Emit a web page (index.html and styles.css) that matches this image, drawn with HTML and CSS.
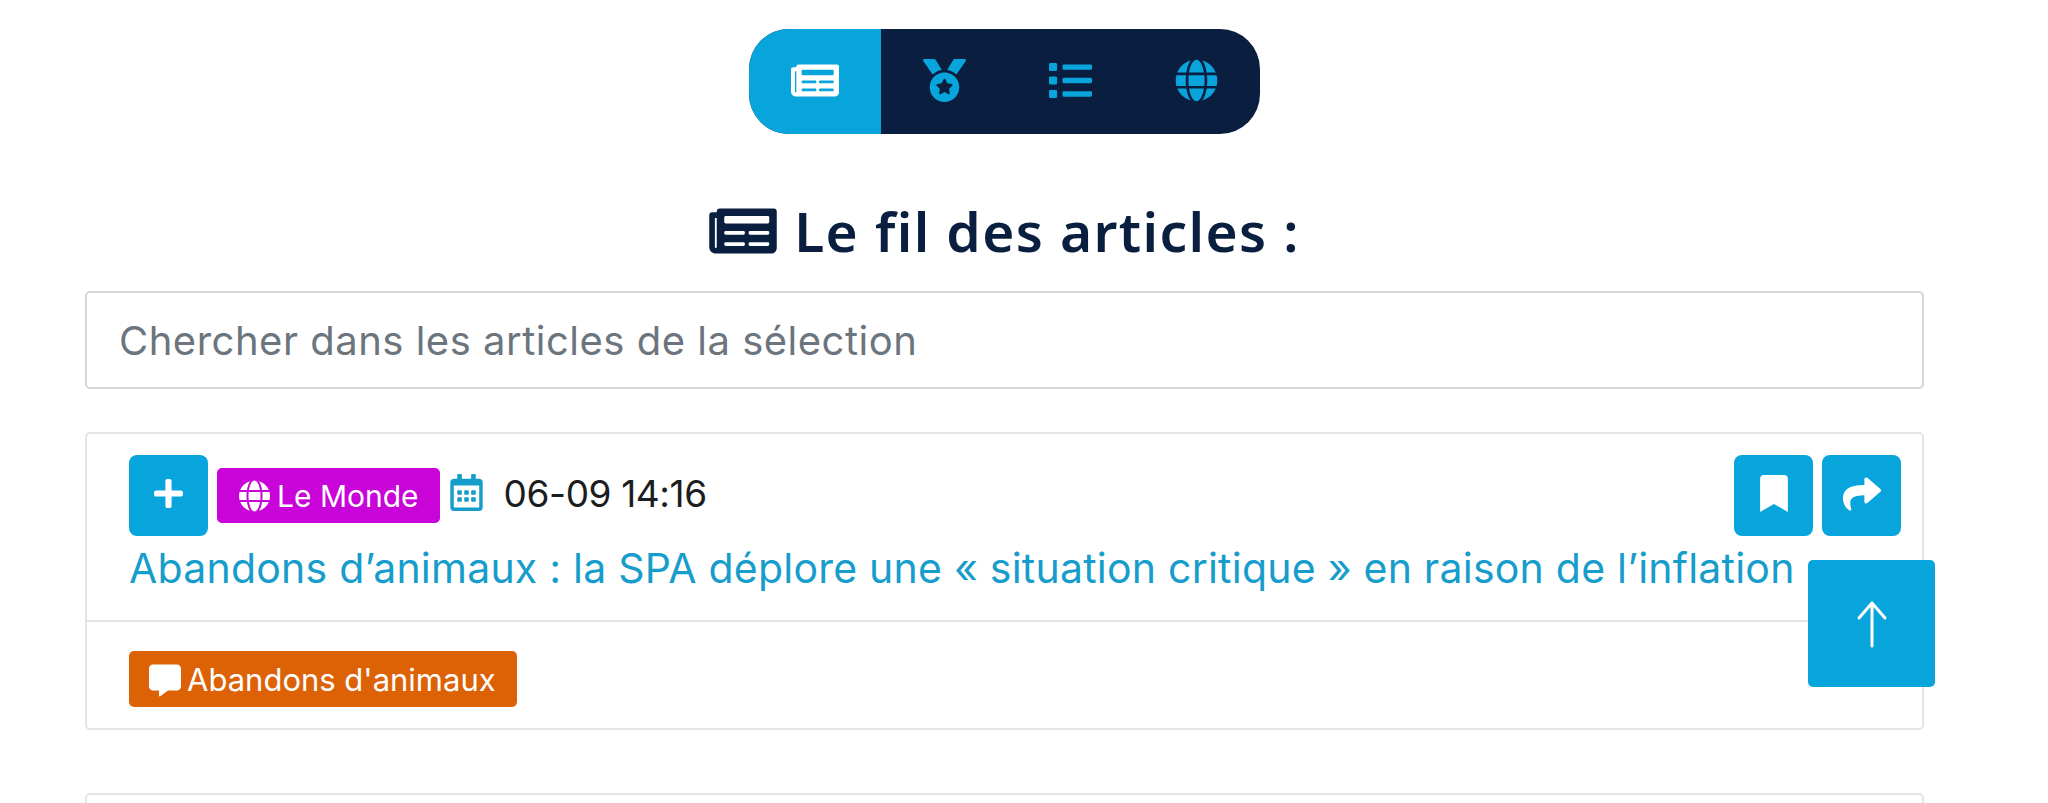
FILE: index.html
```html
<!DOCTYPE html>
<html lang="fr">
<head>
<meta charset="utf-8">
<title>Le fil des articles</title>
<link rel="stylesheet" href="styles.css">
</head>
<body>
<svg class="defs" aria-hidden="true">
  <defs>
    <symbol id="newspaper" viewBox="0 0 576 512"><path d="M552 64H88c-13.255 0-24 10.745-24 24v8H24c-13.255 0-24 10.745-24 24v272c0 30.928 25.072 56 56 56h472c26.51 0 48-21.49 48-48V88c0-13.255-10.745-24-24-24zM56 400a8 8 0 0 1-8-8V144h16v248a8 8 0 0 1-8 8zm236-16H140c-6.627 0-12-5.373-12-12v-8c0-6.627 5.373-12 12-12h152c6.627 0 12 5.373 12 12v8c0 6.627-5.373 12-12 12zm208 0H348c-6.627 0-12-5.373-12-12v-8c0-6.627 5.373-12 12-12h152c6.627 0 12 5.373 12 12v8c0 6.627-5.373 12-12 12zm-208-96H140c-6.627 0-12-5.373-12-12v-8c0-6.627 5.373-12 12-12h152c6.627 0 12 5.373 12 12v8c0 6.627-5.373 12-12 12zm208 0H348c-6.627 0-12-5.373-12-12v-8c0-6.627 5.373-12 12-12h152c6.627 0 12 5.373 12 12v8c0 6.627-5.373 12-12 12zm0-96H140c-6.627 0-12-5.373-12-12v-40c0-6.627 5.373-12 12-12h360c6.627 0 12 5.373 12 12v40c0 6.627-5.373 12-12 12z"/></symbol>
    <symbol id="medal" viewBox="0 0 512 512"><path d="M223.75 130.75L154.62 15.54A31.997 31.997 0 0 0 127.18 0H16.03C3.08 0-4.5 14.57 2.92 25.18l111.27 158.96c29.72-27.77 67.52-46.83 109.56-53.39zM495.97 0H384.82c-11.24 0-21.66 5.9-27.44 15.54l-69.13 115.21c42.04 6.56 79.84 25.62 109.56 53.38L509.08 25.18C516.5 14.57 508.92 0 495.97 0zM256 160c-97.2 0-176 78.8-176 176s78.8 176 176 176 176-78.8 176-176-78.8-176-176-176zm92.52 157.26l-37.93 36.96 8.97 52.22c1.6 9.36-8.26 16.51-16.65 12.09L256 393.88l-46.9 24.65c-8.4 4.45-18.25-2.74-16.65-12.09l8.97-52.22-37.93-36.96c-6.82-6.64-3.05-18.23 6.35-19.59l52.43-7.64 23.43-47.52c2.11-4.28 6.19-6.39 10.28-6.39 4.11 0 8.22 2.14 10.33 6.39l23.43 47.52 52.43 7.64c9.4 1.36 13.17 12.95 6.35 19.59z"/></symbol>
    <symbol id="list" viewBox="0 0 512 512"><path d="M80 368H16a16 16 0 0 0-16 16v64a16 16 0 0 0 16 16h64a16 16 0 0 0 16-16v-64a16 16 0 0 0-16-16zm0-320H16A16 16 0 0 0 0 64v64a16 16 0 0 0 16 16h64a16 16 0 0 0 16-16V64a16 16 0 0 0-16-16zm0 160H16a16 16 0 0 0-16 16v64a16 16 0 0 0 16 16h64a16 16 0 0 0 16-16v-64a16 16 0 0 0-16-16zm416 176H176a16 16 0 0 0-16 16v32a16 16 0 0 0 16 16h320a16 16 0 0 0 16-16v-32a16 16 0 0 0-16-16zm0-320H176a16 16 0 0 0-16 16v32a16 16 0 0 0 16 16h320a16 16 0 0 0 16-16V80a16 16 0 0 0-16-16zm0 160H176a16 16 0 0 0-16 16v32a16 16 0 0 0 16 16h320a16 16 0 0 0 16-16v-32a16 16 0 0 0-16-16z"/></symbol>
    <symbol id="globe" viewBox="0 0 496 512"><path d="M336.5 160C322 70.7 287.8 8 248 8s-74 62.7-88.5 152h177zM152 256c0 22.2 1.2 43.5 3.3 64h185.3c2.1-20.5 3.3-41.8 3.3-64s-1.2-43.5-3.3-64H155.3c-2.1 20.5-3.3 41.8-3.3 64zm324.7-96c-28.6-67.9-86.5-120.4-158-141.6 24.4 33.8 41.2 84.7 50 141.6h108zM177.2 18.4C105.8 39.6 47.8 92.1 19.3 160h108c8.7-56.9 25.5-107.8 49.9-141.6zM487.4 192H372.7c2.1 21 3.3 42.5 3.3 64s-1.2 43-3.3 64h114.6c5.5-20.5 8.6-41.8 8.6-64s-3.1-43.5-8.5-64zM120 256c0-21.5 1.2-43 3.3-64H8.6C3.2 212.5 0 233.8 0 256s3.2 43.5 8.6 64h114.6c-2-21-3.2-42.5-3.2-64zm39.5 96c14.5 89.3 48.7 152 88.5 152s74-62.7 88.5-152h-177zm159.3 141.6c71.4-21.2 129.4-73.7 158-141.6h-108c-8.8 56.9-25.6 107.8-50 141.6zM19.3 352c28.6 67.9 86.5 120.4 158 141.6-24.4-33.8-41.2-84.7-50-141.6h-108z"/></symbol>
    <symbol id="plus" viewBox="0 0 448 512"><path d="M416 208H272V64c0-17.67-14.33-32-32-32h-32c-17.67 0-32 14.33-32 32v144H32c-17.67 0-32 14.33-32 32v32c0 17.67 14.33 32 32 32h144v144c0 17.67 14.33 32 32 32h32c17.67 0 32-14.33 32-32V304h144c17.67 0 32-14.33 32-32v-32c0-17.67-14.33-32-32-32z"/></symbol>
    <symbol id="bookmark" viewBox="0 0 384 512"><path d="M0 512V48C0 21.49 21.49 0 48 0h288c26.51 0 48 21.49 48 48v464L192 400 0 512z"/></symbol>
    <symbol id="share" viewBox="0 0 512 512"><path d="M503.691 189.836L327.687 37.851C312.281 24.546 288 35.347 288 56.015v80.053C127.371 137.907 0 170.1 0 322.326c0 61.441 39.581 122.309 83.333 154.132 13.653 9.931 33.111-2.533 28.077-18.631C66.066 312.814 132.917 274.316 288 272.085V360c0 20.7 24.3 31.453 39.687 18.164l176.004-152c11.071-9.562 11.086-26.753 0-36.328z"/></symbol>
    <symbol id="calendar" viewBox="0 0 448 512"><path d="M148 288h-40c-6.6 0-12-5.4-12-12v-40c0-6.6 5.4-12 12-12h40c6.6 0 12 5.4 12 12v40c0 6.6-5.4 12-12 12zm108-12v-40c0-6.6-5.4-12-12-12h-40c-6.6 0-12 5.4-12 12v40c0 6.6 5.4 12 12 12h40c6.6 0 12-5.4 12-12zm96 0v-40c0-6.6-5.4-12-12-12h-40c-6.6 0-12 5.4-12 12v40c0 6.6 5.4 12 12 12h40c6.6 0 12-5.4 12-12zm-96 96v-40c0-6.6-5.4-12-12-12h-40c-6.6 0-12 5.4-12 12v40c0 6.6 5.4 12 12 12h40c6.6 0 12-5.4 12-12zm-96 0v-40c0-6.6-5.4-12-12-12h-40c-6.6 0-12 5.4-12 12v40c0 6.6 5.4 12 12 12h40c6.6 0 12-5.4 12-12zm192 0v-40c0-6.6-5.4-12-12-12h-40c-6.6 0-12 5.4-12 12v40c0 6.6 5.4 12 12 12h40c6.6 0 12-5.4 12-12zm96-260v352c0 26.5-21.5 48-48 48H48c-26.5 0-48-21.5-48-48V112c0-26.5 21.5-48 48-48h48V12c0-6.6 5.4-12 12-12h40c6.6 0 12 5.4 12 12v52h128V12c0-6.6 5.4-12 12-12h40c6.6 0 12 5.4 12 12v52h48c26.5 0 48 21.5 48 48zm-48 346V160H48v298c0 3.3 2.7 6 6 6h340c3.3 0 6-2.7 6-6z"/></symbol>
    <symbol id="comment" viewBox="0 0 512 512"><path d="M448 0H64C28.7 0 0 28.7 0 64v288c0 35.3 28.7 64 64 64h96v84c0 9.8 11.2 15.5 19.1 9.7L304 416h144c35.3 0 64-28.7 64-64V64c0-35.3-28.7-64-64-64z"/></symbol>
  </defs>
</svg>

<main class="page">
  <nav class="switcher">
    <a class="switch-item switch-active"><svg class="ico ico-news"><use href="#newspaper"/></svg></a>
    <a class="switch-item"><svg class="ico ico-nav"><use href="#medal"/></svg></a>
    <a class="switch-item"><svg class="ico ico-nav"><use href="#list"/></svg></a>
    <a class="switch-item"><svg class="ico ico-nav"><use href="#globe"/></svg></a>
  </nav>

  <h1 class="title"><svg class="ico ico-title"><use href="#newspaper"/></svg><span>Le fil des articles :</span></h1>

  <input class="search" type="text" placeholder="Chercher dans les articles de la sélection">

  <article class="card">
    <div class="card-top">
      <div class="meta">
        <button class="btn"><svg class="ico ico-plus"><use href="#plus"/></svg></button>
        <span class="badge"><svg class="ico ico-badge"><use href="#globe"/></svg>Le Monde</span>
        <svg class="ico ico-cal"><use href="#calendar"/></svg>
        <span class="date">06-09 14:16</span>
        <div class="actions">
          <button class="btn"><svg class="ico ico-book"><use href="#bookmark"/></svg></button>
          <button class="btn"><svg class="ico ico-share"><use href="#share"/></svg></button>
        </div>
      </div>
      <a class="headline">Abandons d’animaux : la SPA déplore une « situation critique » en raison de l’inflation</a>
    </div>
    <div class="card-foot">
      <span class="tag"><svg class="ico ico-comment"><use href="#comment"/></svg>Abandons d'animaux</span>
    </div>
  </article>

  <article class="card card-next"></article>
</main>

<button class="to-top" aria-label="Haut de page">
  <svg class="arrow" viewBox="0 0 32 48"><path d="M16 46V3M3 18 16 3l13 15"/></svg>
</button>
</body>
</html>
```

FILE: styles.css
```css
* { box-sizing: border-box; }
html, body { margin: 0; height: 803px; overflow: hidden; background: #fff; }
body { font-family: "Inter", "Noto Sans", sans-serif; color: #212529; }
.defs { display: none; }
.ico { display: block; fill: currentColor; flex: none; }

.page { height: 803px; overflow: hidden; padding: 29px 124px 0 85px; display: flex; flex-direction: column; align-items: stretch; }

.switcher {
  flex: none; align-self: center; display: flex; height: 105px; width: 511px;
  border-radius: 40px; overflow: hidden;
  background: #0a1f40; color: #08a4dc;
}
.switch-item { flex: 1; display: flex; align-items: center; justify-content: center; padding-bottom: 3px; }
.switch-active { flex: 0 0 132px; background: #08a4dc; color: #fff; }
.ico-news { width: 48px; height: 43px; }
.ico-nav { width: 43px; height: 43px; }

.title {
  flex: none; margin: 61px 0 0; display: flex; align-items: center; justify-content: center; gap: 17px;
  color: #0a1f40; font-family: "Noto Sans", sans-serif; font-weight: 600; font-size: 55px; letter-spacing: 1.4px; line-height: 72px;
}
.ico-title { width: 68px; height: 60px; }

.search {
  flex: none; display: block; width: 100%; height: 98px; margin-top: 24px; padding: 0 32px;
  border: 2px solid #d4d6d8; border-radius: 5px; background: #fff;
  font-family: "Inter", sans-serif; font-size: 40px; letter-spacing: .5px; color: #212529; outline: none;
}
.search::placeholder { color: #6c757d; opacity: 1; }

.card { flex: none; border: 2px solid #e3e4e5; border-radius: 5px; margin-top: 43px; background: #fff; }
.card-top { padding: 21px 21px 0 42px; height: 188px; border-bottom: 2px solid #e3e4e5; }
.meta { display: flex; align-items: flex-start; }
.btn {
  width: 79px; height: 81px; border: 0; border-radius: 8px; padding: 0; background: #08a4dc; color: #fff;
  display: flex; align-items: center; justify-content: center; padding-bottom: 4px;
}
.ico-plus { width: 29px; height: 33px; }
.ico-book { width: 28px; height: 37px; }
.ico-share { width: 38px; height: 38px; }

.badge {
  height: 55px; margin: 13px 0 0 9px; padding: 0 21px 0 22px; display: flex; align-items: center; gap: 7px;
  border-radius: 5px; background: #c804d8; color: #fff; font-size: 30px; white-space: nowrap;
}
.ico-badge { width: 31px; height: 32px; }
.ico-cal { width: 33px; height: 37px; margin: 19px 0 0 10px; color: #169dcb; }
.date { margin: 17px 0 0 21px; font-size: 37px; letter-spacing: -.4px; line-height: 44px; color: #1b1d20; white-space: nowrap; }
.actions { margin-left: auto; display: flex; gap: 9px; }
.headline { display: block; margin-top: 7px; font-size: 41px; letter-spacing: .23px; line-height: 50px; color: #169dcb; white-space: nowrap; }

.card-foot { padding: 29px 42px 22px; height: 106px; }
.tag {
  display: inline-flex; align-items: center; gap: 6px; height: 56px; padding: 0 21px 0 20px;
  border-radius: 5px; background: #dd6206; color: #fff; font-size: 31px; white-space: nowrap;
}
.ico-comment { width: 32px; height: 37px; margin-top: 2px; }

.card-next { height: 60px; margin-top: 63px; }

.to-top {
  position: fixed; left: 1808px; top: 560px; width: 127px; height: 127px; padding: 0; border: 0; border-radius: 5px;
  background: #08a4dc; display: flex; align-items: center; justify-content: center;
}
.arrow { width: 32px; height: 48px; fill: none; stroke: #fff; stroke-width: 3px; stroke-linecap: round; stroke-linejoin: round; }
```
